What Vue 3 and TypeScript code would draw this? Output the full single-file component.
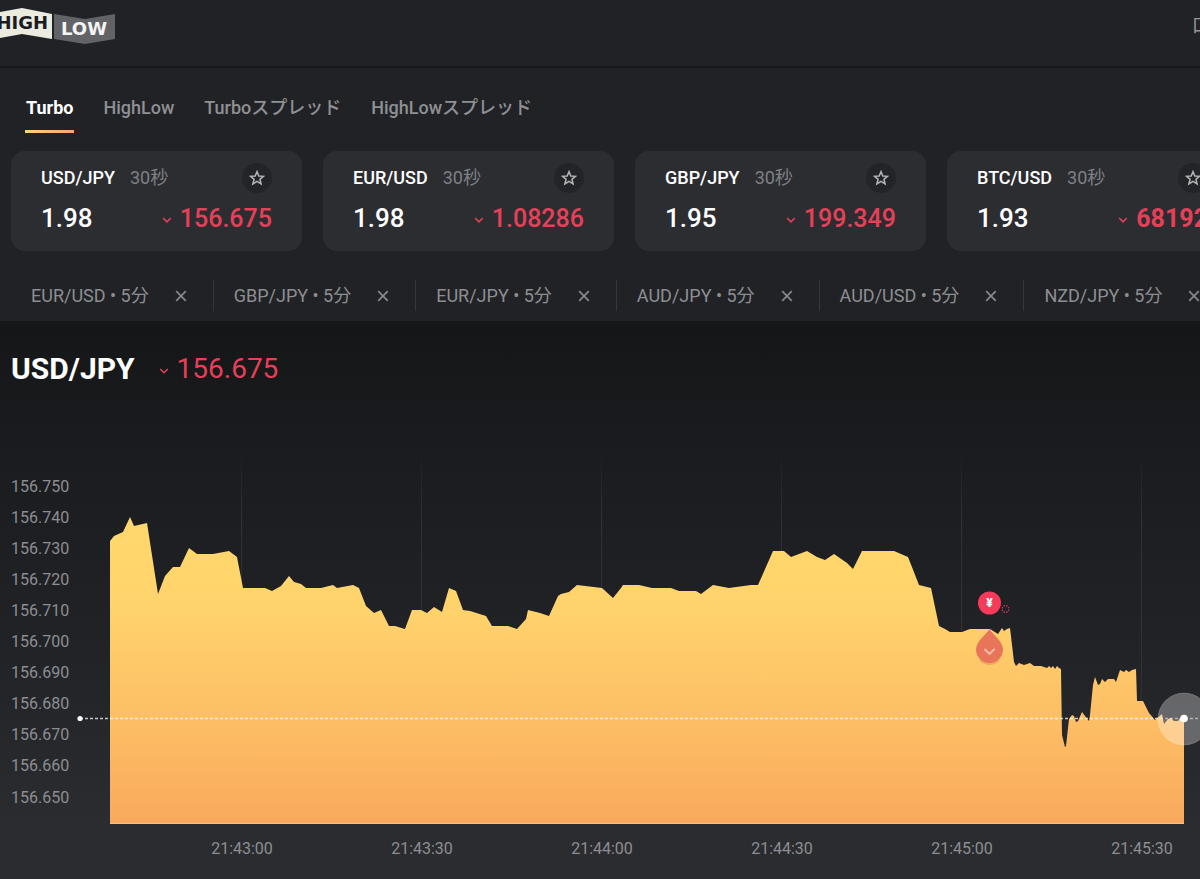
<script setup lang="ts">
import { ref } from 'vue'

interface Card {
  pair: string
  payout: string
  rate: string
  strong?: boolean
}

const tabs: string[] = ['Turbo', 'HighLow', 'Turboスプレッド', 'HighLowスプレッド']
const activeTab = ref('Turbo')

const cards: Card[] = [
  { pair: 'USD/JPY', payout: '1.98', rate: '156.675' },
  { pair: 'EUR/USD', payout: '1.98', rate: '1.08286' },
  { pair: 'GBP/JPY', payout: '1.95', rate: '199.349' },
  { pair: 'BTC/USD', payout: '1.93', rate: '68192', strong: true },
]

const filters = ref<string[]>(['EUR/USD', 'GBP/JPY', 'EUR/JPY', 'AUD/JPY', 'AUD/USD', 'NZD/JPY'])
const favourites = ref<string[]>([])

function removeFilter(pair: string) {
  filters.value = filters.value.filter((f) => f !== pair)
}
function toggleFavourite(pair: string) {
  favourites.value = favourites.value.includes(pair)
    ? favourites.value.filter((f) => f !== pair)
    : [...favourites.value, pair]
}

const levels = Array.from({ length: 11 }, (_, i) => ({
  label: (156.75 - i * 0.01).toFixed(3),
  y: 492 + Math.floor(i * 31.1),
}))

const times = ['21:43:00', '21:43:30', '21:44:00', '21:44:30', '21:45:00', '21:45:30'].map(
  (label, i) => ({ label, x: 241 + i * 180 }),
)

const series =
  '110,541 114,536 123,532 130,517 134,526 147,523 158,594 165,576 173,567 180,567 189,548 197,554 213,554 ' +
  '229,551 237,557 243,588 265,588 272,591 281,586 289,576 294,582 301,584 306,588 321,588 333,585 337,588 ' +
  '353,585 359,588 366,606 374,613 381,610 389,626 395,626 405,629 412,610 421,610 427,613 434,607 442,612 ' +
  '449,588 456,591 463,610 470,611 486,616 492,626 508,626 517,629 526,619 528,610 540,613 549,616 558,596 ' +
  '561,594 569,592 577,585 602,588 613,598 621,588 623,585 639,585 652,588 671,588 679,591 696,591 701,594 ' +
  '713,585 729,588 751,585 758,585 773,551 784,551 791,557 807,551 817,557 825,560 834,554 847,563 853,569 ' +
  '862,551 894,551 908,557 919,585 931,588 939,626 945,629 950,632 962,632 970,629 990,629 998,634 1002,628 ' +
  '1004,631 1007,629 1010,628 1014,662 1016,666 1019,663 1024,665 1030,663 1034,666 1041,666 1047,668 1049,666 ' +
  '1051,668 1053,666 1055,669 1057,666 1059,668 1061,669 1062,735 1065,747 1066,746 1069,719 1072,715 1074,716 ' +
  '1076,722 1078,721 1082,712 1085,716 1089,721 1090,715 1093,685 1095,677 1098,685 1100,684 1102,679 1105,682 ' +
  '1108,679 1114,679 1116,682 1120,670 1124,672 1126,670 1129,672 1132,670 1136,669 1137,701 1143,701 1149,713 ' +
  '1155,720 1162,714 1164,724 1168,719 1171,718 1174,721 1178,721 1180,718 1184,718'
const area = `110,824 ${series} 1184,824`

// Small dots of the pending-payout spinner, evenly spaced round its centre.
const spinner = Array.from({ length: 8 }, (_, i) => ({
  x: 1005.5 + 3.4 * Math.cos((i * Math.PI) / 4 + 0.4),
  y: 609 + 3.4 * Math.sin((i * Math.PI) / 4 + 0.4),
}))
</script>

<template>
  <div class="page">
    <header class="topbar">
      <a class="logo" href="#" aria-label="HIGH LOW">
        <svg width="116" height="46" viewBox="0 0 116 46">
          <path d="M0 12 L22 8 L52 14 V39 L22 34 L0 38 Z" fill="#ebebdf" />
          <path d="M54 14 L85 19 L115 14 V39 L85 44 L54 39 Z" fill="#626366" />
          <text class="logo-text high" x="48" y="29">HIGH</text>
          <text class="logo-text low" x="61" y="35">LOW</text>
        </svg>
      </a>
      <a class="account" href="#">口</a>
    </header>

    <nav class="tabs">
      <button
        v-for="tab in tabs"
        :key="tab"
        type="button"
        class="tab"
        :class="{ active: tab === activeTab }"
        @click="activeTab = tab"
      >
        {{ tab }}
      </button>
    </nav>

    <section class="cards">
      <article v-for="card in cards" :key="card.pair" class="card">
        <div class="card-head">
          <span class="pair">{{ card.pair }}</span>
          <span class="term">30秒</span>
          <button
            type="button"
            class="star"
            :aria-label="card.pair"
            :aria-pressed="favourites.includes(card.pair)"
            @click="toggleFavourite(card.pair)"
          >
            <svg width="16" height="16" viewBox="0 0 16 16">
              <path
                d="M8 1.6 L9.8 6 L14.5 6.3 L10.9 9.3 L12.1 13.9 L8 11.4 L3.9 13.9 L5.1 9.3 L1.5 6.3 L6.2 6 Z"
                :fill="favourites.includes(card.pair) ? '#c4c4c6' : 'none'"
                stroke="#b4b5b7"
                stroke-width="1.5"
              />
            </svg>
          </button>
        </div>
        <div class="card-values">
          <span class="payout">{{ card.payout }}</span>
          <span class="rate" :class="{ strong: card.strong }">
            <svg class="down" width="10" height="8" viewBox="0 0 10 8">
              <path d="M1.2 2 L5 5.8 L8.8 2" fill="none" stroke="currentColor" stroke-width="1.6" />
            </svg>
            {{ card.rate }}
          </span>
        </div>
      </article>
    </section>

    <ul class="filters">
      <li v-for="pair in filters" :key="pair" class="filter">
        <span class="filter-name">{{ pair }} • 5分</span>
        <button type="button" class="close" :aria-label="pair" @click="removeFilter(pair)">
          <svg width="12" height="12" viewBox="0 0 12 12">
            <path d="M1.2 1.2 L10.8 10.8 M10.8 1.2 L1.2 10.8" stroke="#85868a" stroke-width="1.8" />
          </svg>
        </button>
      </li>
    </ul>

    <main class="chart">
      <div class="chart-head">
        <h1>USD/JPY</h1>
        <span class="chart-rate">
          <svg class="down" width="10" height="8" viewBox="0 0 10 8">
            <path d="M1.2 2 L5 5.8 L8.8 2" fill="none" stroke="currentColor" stroke-width="1.5" />
          </svg>
          156.675
        </span>
      </div>

      <svg class="plot" viewBox="0 430 1200 449">
        <defs>
          <linearGradient id="areaFill" gradientUnits="userSpaceOnUse" x1="0" y1="517" x2="0" y2="824">
            <stop offset="0" stop-color="#ffd86c" />
            <stop offset="0.3" stop-color="#ffd36c" />
            <stop offset="0.65" stop-color="#fdbf65" />
            <stop offset="1" stop-color="#f9a95d" />
          </linearGradient>
          <linearGradient id="gridFill" gradientUnits="userSpaceOnUse" x1="0" y1="450" x2="0" y2="520">
            <stop offset="0" stop-color="#303136" stop-opacity="0" />
            <stop offset="1" stop-color="#303136" />
          </linearGradient>
        </defs>

        <rect v-for="t in times" :key="t.label" :x="t.x" y="450" width="1" height="374" fill="url(#gridFill)" />
        <polygon :points="area" fill="url(#areaFill)" />
        <path d="M110 823.5 H1184" stroke="#ffc078" stroke-width="1" />

        <text v-for="l in levels" :key="l.label" class="axis" x="11" :y="l.y">{{ l.label }}</text>
        <text v-for="t in times" :key="t.label" class="axis time" :x="t.x + 1" y="854">{{ t.label }}</text>

        <circle cx="1184" cy="719" r="26" fill="#fff" fill-opacity="0.3" stroke="#fff" stroke-opacity="0.2" />
        <path d="M80 718.5 H1160" stroke="#fff" stroke-opacity="0.75" stroke-width="1.4" stroke-dasharray="3 2" />
        <path d="M1160 718.5 H1200" stroke="#fff" stroke-opacity="0.5" stroke-width="1.4" stroke-dasharray="3 2" />
        <circle cx="80" cy="718.5" r="2.6" fill="#fff" />
        <circle cx="1184" cy="718.5" r="3.8" fill="#fff" />

        <ellipse cx="989.5" cy="659" rx="10" ry="6" fill="#e8795a" fill-opacity="0.45" />
        <path
          d="M989.5 629 C992 634 1003 641 1003 649.5 A13.5 13.5 0 0 1 976 649.5 C976 641 987 634 989.5 629 Z"
          fill="#e8755a"
        />
        <path d="M984.5 649 L989.5 654 L994.5 649" fill="none" stroke="#f8bfa8" stroke-width="1.8" />

        <circle cx="989.5" cy="603" r="11.5" fill="#f53b59" />
        <text class="yen" x="989.5" y="607">¥</text>
        <circle v-for="(dot, i) in spinner" :key="i" :cx="dot.x" :cy="dot.y" r="0.8" fill="#d63a55" />
      </svg>
    </main>
  </div>
</template>

<style>
body {
  margin: 0;
  background: #212226;
}
</style>

<style scoped>
.page {
  min-height: 100vh;
  overflow: hidden;
  background: #212226;
  color: #fff;
  font-family: Roboto, 'Noto Sans CJK JP', sans-serif;
  font-size: 18px;
}

button {
  padding: 0;
  border: 0;
  background: none;
  color: inherit;
  font: inherit;
  cursor: pointer;
}

svg {
  display: block;
}

.topbar {
  display: flex;
  align-items: flex-start;
  justify-content: space-between;
  height: 66px;
  overflow: hidden;
  border-bottom: 2px solid #17181b;
}

.logo-text {
  font: bold 18px 'DejaVu Sans', sans-serif;
}

.logo-text.high {
  fill: #1b1c1f;
  text-anchor: end;
}

.logo-text.low {
  fill: #f4f4f4;
}

.account {
  margin: 13px -10px 0 0;
  color: #98999b;
  line-height: 26px;
  text-decoration: none;
}

.tabs {
  display: flex;
  gap: 28px;
  height: 83px;
  box-sizing: border-box;
  padding: 27px 25px 18px;
}

.tab {
  padding: 0 1px 9px;
  border-bottom: 3px solid transparent;
  color: #8f9093;
  font-weight: 500;
  line-height: 26px;
  white-space: nowrap;
}

.tab.active {
  border-image: linear-gradient(90deg, #fbd57b, #f0a672) 1;
  color: #fff;
  font-weight: 700;
}

.cards {
  display: flex;
  gap: 21px;
  padding-left: 11px;
}

.card {
  flex: 0 0 291px;
  box-sizing: border-box;
  padding: 12px 30px;
  border-radius: 14px;
  background: #2c2d31;
}

.card-head {
  display: flex;
  align-items: center;
  gap: 15px;
  height: 30px;
  line-height: 26px;
}

.pair {
  font-weight: 500;
}

.term {
  color: #7e8085;
}

.star {
  display: flex;
  align-items: center;
  justify-content: center;
  width: 30px;
  height: 30px;
  margin-left: auto;
  border-radius: 50%;
  background: #232428;
}

.card-values {
  display: flex;
  align-items: center;
  justify-content: space-between;
  height: 42px;
  padding-top: 4px;
}

.payout {
  font-size: 26px;
  font-weight: 500;
}

.rate,
.chart-rate {
  display: flex;
  align-items: center;
  gap: 8px;
  color: #e64059;
}

.rate {
  font-size: 25px;
  font-weight: 500;
}

.rate.strong {
  font-weight: 700;
}

.down {
  margin-top: 3px;
}

.filters {
  display: flex;
  margin: 0;
  padding: 29px 0 10px 11px;
  list-style: none;
}

.filter {
  display: flex;
  flex: none;
  align-items: center;
  gap: 26px;
  height: 31px;
  padding: 0 26px 0 20px;
  border-right: 1px solid #35363a;
  color: #8d8e91;
  white-space: nowrap;
}

.filter-name {
  padding-bottom: 3px;
}

.chart {
  background: linear-gradient(#151617, #1b1c20 25%, #222327 60%, #2b2c30 90%);
}

.chart-head {
  display: flex;
  align-items: center;
  gap: 24px;
  padding: 28px 11px 41px;
  line-height: 40px;
}

h1 {
  margin: 0;
  font-size: 30px;
  font-weight: 700;
}

.chart-rate {
  font-size: 28px;
}

.plot {
  width: 100%;
  height: auto;
}

.axis {
  fill: #8d8e91;
  font-size: 16px;
}

.time {
  text-anchor: middle;
}

.yen {
  fill: #fff;
  font-size: 12px;
  font-weight: 900;
  text-anchor: middle;
}
</style>
